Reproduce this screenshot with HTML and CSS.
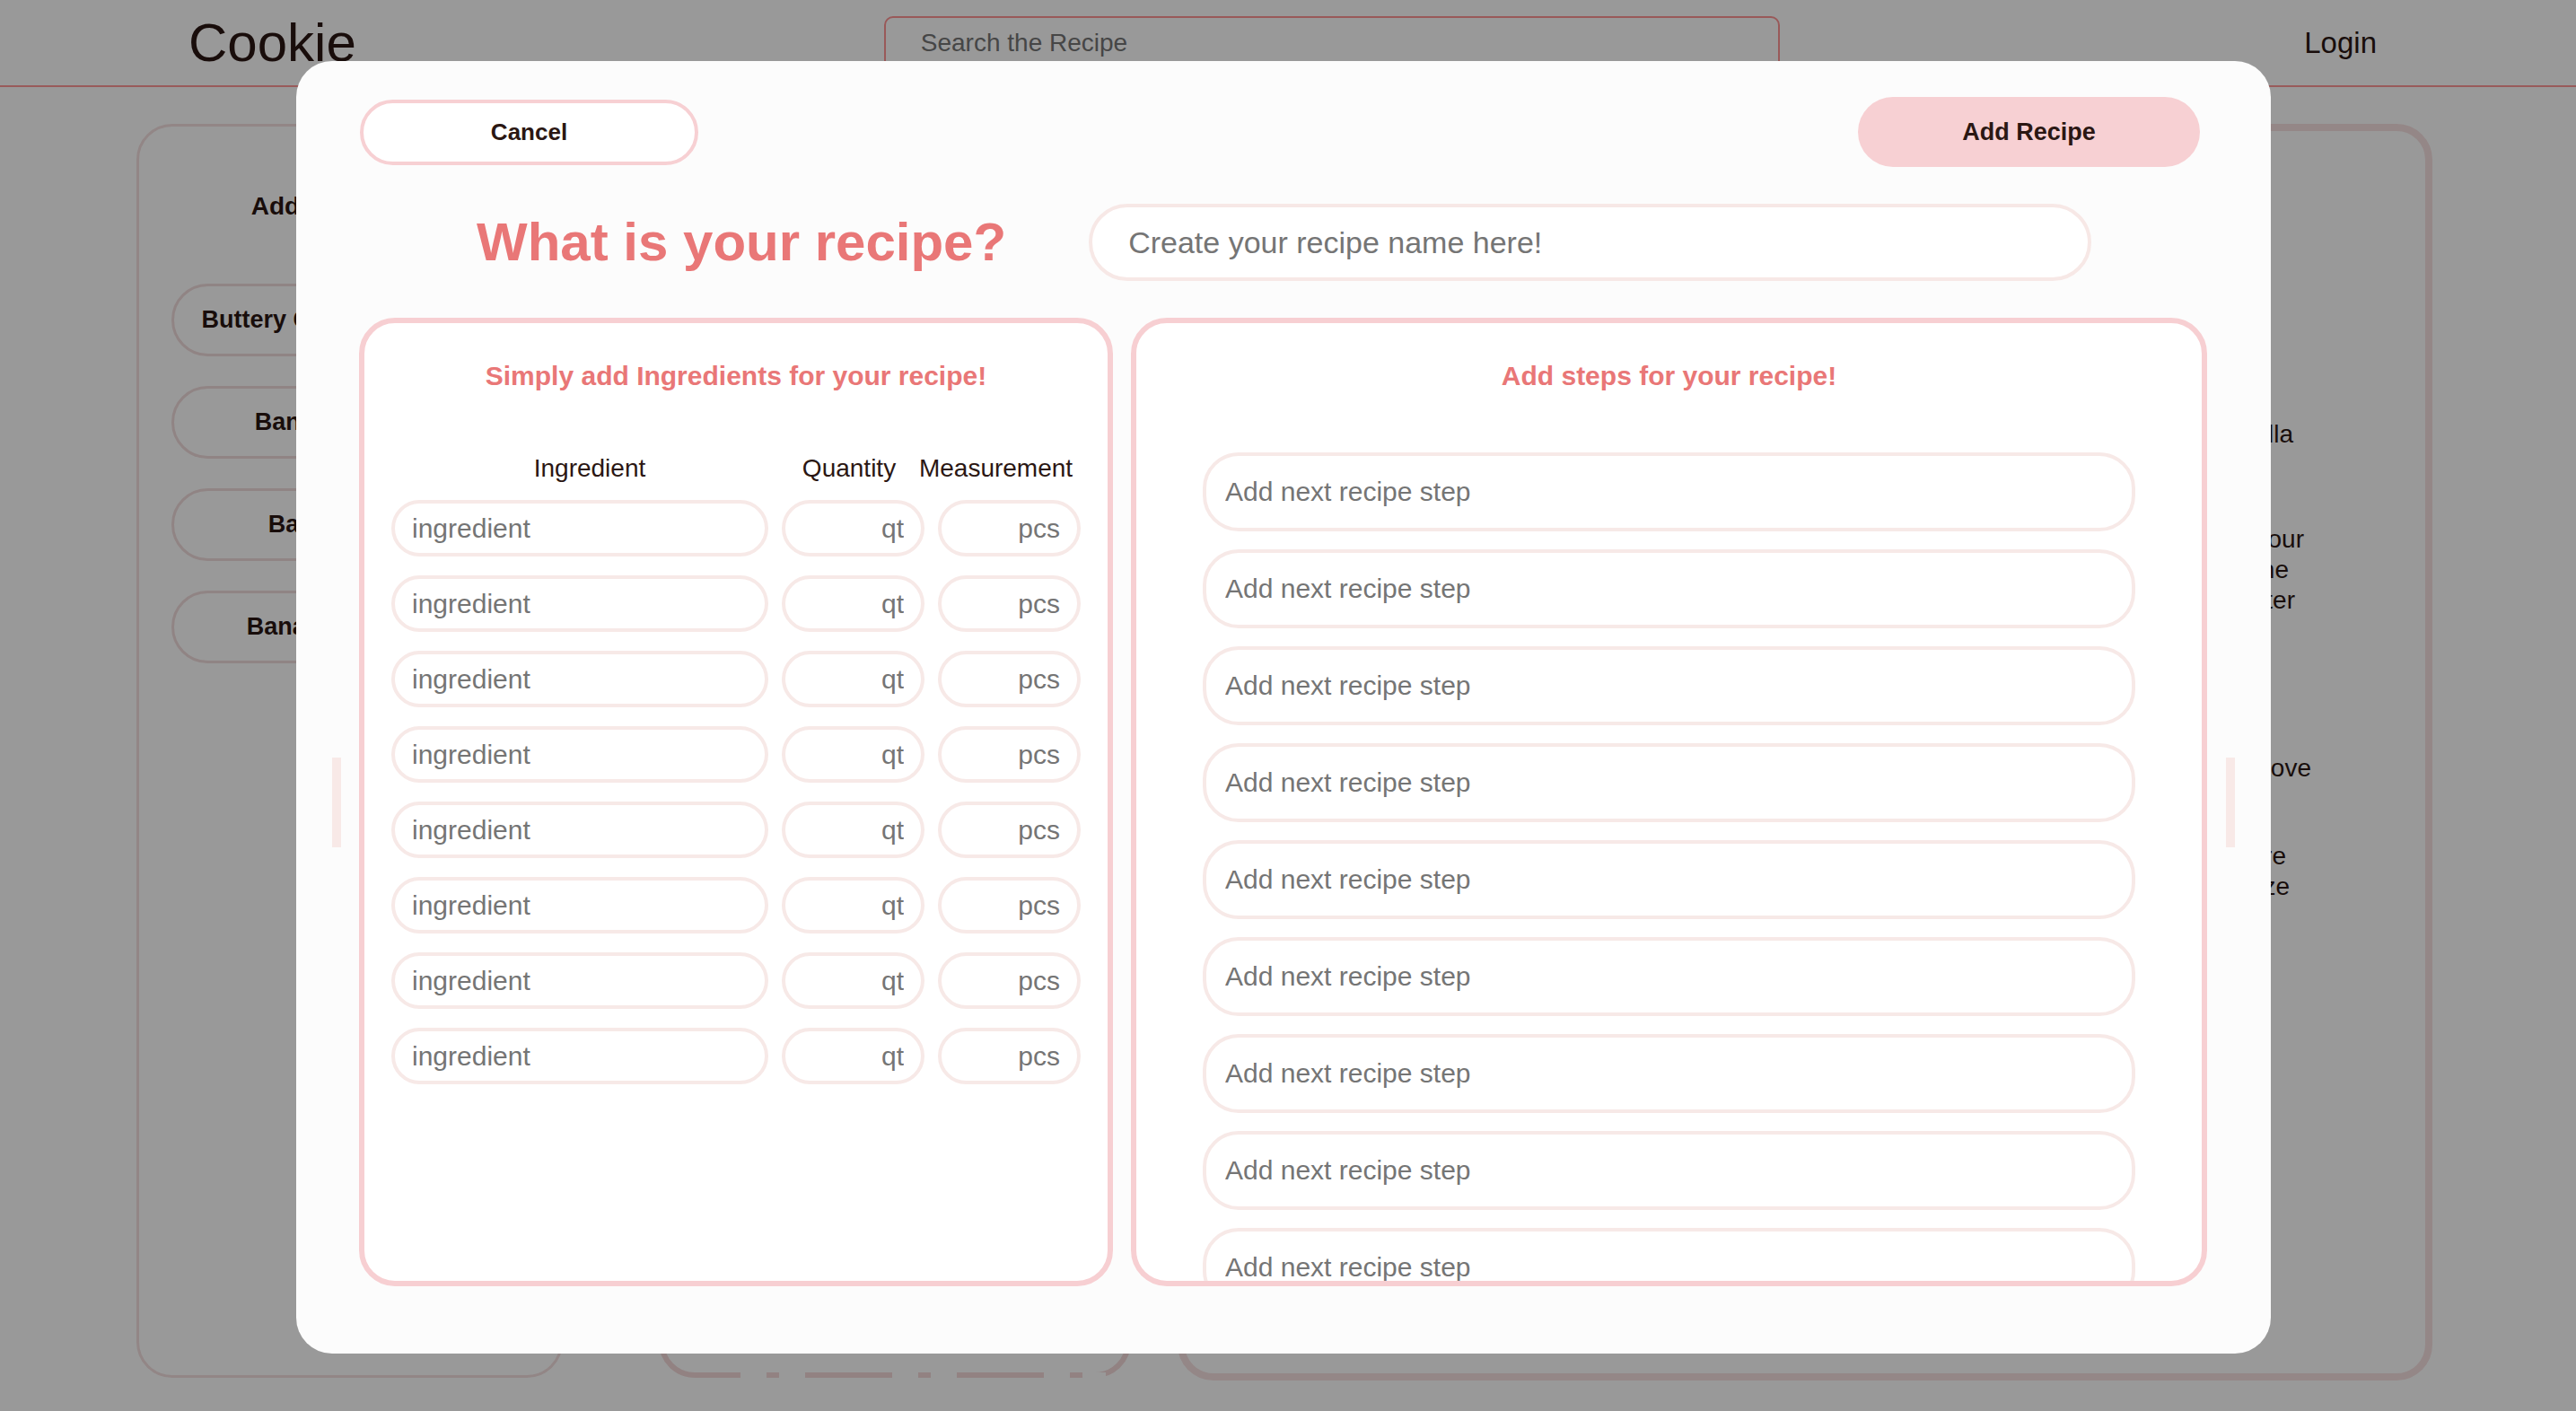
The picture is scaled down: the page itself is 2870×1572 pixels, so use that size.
FILE: index.html
```html
<!DOCTYPE html>
<html lang="en">
<head>
<meta charset="utf-8">
<title>Cookie</title>
<link rel="stylesheet" href="styles.css">
</head>
<body>
<header class="site-header">
  <div class="logo">Cookie</div>
  <input class="search" type="text" placeholder="Search the Recipe">
  <div class="login">Login</div>
</header>

<main class="page">
  <aside class="sidebar">
    <div class="sidebar-title">Add New Recipe</div>
    <div class="side-list">
      <div class="side-btn">Buttery Chocolate Cookie</div>
      <div class="side-btn">Banana Brownie</div>
      <div class="side-btn">Baked Donuts</div>
      <div class="side-btn">Banana Pancakes</div>
    </div>
  </aside>
  <section class="mid-card"></section>
  <section class="recipe-card">
    <div class="recipe-text">
      <span class="ln ln-a">2 tsp vanilla</span>
      <span class="ln ln-b">Whisk the flour</span>
      <span class="ln ln-c">baking soda in one</span>
      <span class="ln ln-d">salt with butter</span>
      <span class="ln ln-e">Bake in the stove</span>
      <span class="ln ln-f">Let cool before</span>
      <span class="ln ln-g">you freeze</span>
    </div>
  </section>
</main>

<div class="overlay">
  <div class="modal">
    <div class="handle handle-left"></div>
    <div class="handle handle-right"></div>

    <div class="modal-top">
      <button class="btn-cancel" type="button">Cancel</button>
      <button class="btn-add" type="button">Add Recipe</button>
    </div>

    <div class="title-row">
      <h1 class="title">What is your recipe?</h1>
      <input class="name-input" type="text" placeholder="Create your recipe name here!">
    </div>

    <div class="panels">
      <section class="panel">
        <h2 class="panel-title">Simply add Ingredients for your recipe!</h2>
        <div class="ing-labels">
          <span>Ingredient</span>
          <span>Quantity</span>
          <span>Measurement</span>
        </div>
        <div class="ing-rows">
          <div class="ing-row"><input class="field" placeholder="ingredient"><input class="field qt" placeholder="qt"><input class="field pcs" placeholder="pcs"></div>
          <div class="ing-row"><input class="field" placeholder="ingredient"><input class="field qt" placeholder="qt"><input class="field pcs" placeholder="pcs"></div>
          <div class="ing-row"><input class="field" placeholder="ingredient"><input class="field qt" placeholder="qt"><input class="field pcs" placeholder="pcs"></div>
          <div class="ing-row"><input class="field" placeholder="ingredient"><input class="field qt" placeholder="qt"><input class="field pcs" placeholder="pcs"></div>
          <div class="ing-row"><input class="field" placeholder="ingredient"><input class="field qt" placeholder="qt"><input class="field pcs" placeholder="pcs"></div>
          <div class="ing-row"><input class="field" placeholder="ingredient"><input class="field qt" placeholder="qt"><input class="field pcs" placeholder="pcs"></div>
          <div class="ing-row"><input class="field" placeholder="ingredient"><input class="field qt" placeholder="qt"><input class="field pcs" placeholder="pcs"></div>
          <div class="ing-row"><input class="field" placeholder="ingredient"><input class="field qt" placeholder="qt"><input class="field pcs" placeholder="pcs"></div>
        </div>
      </section>

      <section class="panel">
        <h2 class="panel-title">Add steps for your recipe!</h2>
        <div class="steps">
          <input class="step" placeholder="Add next recipe step">
          <input class="step" placeholder="Add next recipe step">
          <input class="step" placeholder="Add next recipe step">
          <input class="step" placeholder="Add next recipe step">
          <input class="step" placeholder="Add next recipe step">
          <input class="step" placeholder="Add next recipe step">
          <input class="step" placeholder="Add next recipe step">
          <input class="step" placeholder="Add next recipe step">
          <input class="step" placeholder="Add next recipe step">
        </div>
      </section>
    </div>
  </div>
</div>
</body>
</html>
```

FILE: styles.css
```css
* {
  box-sizing: border-box;
}

html,
body {
  margin: 0;
  padding: 0;
}

body {
  width: 2870px;
  height: 1572px;
  overflow: hidden;
  background: #ffffff;
  color: #2b1713;
  font-family: "Liberation Sans", Arial, sans-serif;
}

input,
button {
  font-family: "Liberation Sans", Arial, sans-serif;
}

input::placeholder {
  color: #757575;
  opacity: 1;
}

/* ---------- page behind the modal ---------- */
.site-header {
  height: 97px;
  display: flex;
  align-items: center;
  padding-left: 210px;
  border-bottom: 2px solid #ff9898;
}

.logo {
  font-size: 60px;
  line-height: 1;
}

.search {
  margin-left: 588px;
  width: 998px;
  height: 60px;
  border: 2px solid #ff9494;
  border-radius: 10px;
  padding: 0 39px;
  font-size: 28px;
  background: #ffffff;
  outline: none;
}

.login {
  margin-left: auto;
  margin-right: 222px;
  font-size: 33px;
  line-height: 1;
}

.page {
  display: flex;
  align-items: flex-start;
  padding: 41px 0 0 152px;
}

.sidebar {
  width: 475px;
  height: 1397px;
  border: 3px solid #f3dfdf;
  border-radius: 40px;
  padding: 73px 36px 0;
  display: flex;
  flex-direction: column;
}

.sidebar-title {
  font-size: 28px;
  font-weight: 700;
  line-height: 32px;
  text-align: center;
  white-space: nowrap;
}

.side-list {
  margin-top: 70px;
  display: flex;
  flex-direction: column;
  gap: 33px;
}

.side-btn {
  height: 81px;
  border: 3px solid #f1dcdc;
  border-radius: 41px;
  display: flex;
  align-items: center;
  justify-content: center;
  font-size: 27px;
  font-weight: 700;
  white-space: nowrap;
}

.mid-card {
  position: relative;
  margin-left: 107px;
  width: 526px;
  height: 1397px;
  border: 6px solid #f3d9d9;
  border-radius: 40px;
}

.mid-card::after {
  content: "";
  position: absolute;
  left: 85px;
  bottom: -6px;
  width: 407px;
  height: 6px;
  background: repeating-linear-gradient(to right, #ffffff 0 29px, transparent 29px 43px, #ffffff 43px 72px, transparent 72px 169px);
}

.recipe-card {
  margin-left: 52px;
  width: 1398px;
  height: 1400px;
  border: 8px solid #f7e1e1;
  border-radius: 40px;
}

.recipe-text {
  width: 1255px;
  text-align: right;
  font-size: 28px;
  line-height: 34px;
}

.ln {
  display: block;
  white-space: nowrap;
}

.ln-a {
  margin-top: 321px;
  padding-right: 20px;
}

.ln-b {
  margin-top: 83px;
  padding-right: 8px;
}

.ln-c {
  padding-right: 25px;
}

.ln-d {
  padding-right: 18px;
}

.ln-e {
  margin-top: 153px;
  padding-right: 0;
}

.ln-f {
  margin-top: 64px;
  padding-right: 28px;
}

.ln-g {
  padding-right: 24px;
}

/* ---------- modal ---------- */
.overlay {
  position: fixed;
  inset: 0;
  background: rgba(0, 0, 0, 0.4);
  display: flex;
  align-items: flex-start;
  padding: 68px 0 0 330px;
}

.modal {
  position: relative;
  width: 2200px;
  height: 1440px;
  background: #fcfcfc;
  border-radius: 40px;
  padding: 40px 71px 75px 70px;
  display: flex;
  flex-direction: column;
}

.handle {
  position: absolute;
  top: 776px;
  width: 10px;
  height: 100px;
  background: #f8e9e7;
}

.handle-left {
  left: 40px;
}

.handle-right {
  left: 2150px;
}

.modal-top {
  height: 78px;
  display: flex;
  align-items: center;
  justify-content: space-between;
  padding: 0 8px 0 1px;
}

.btn-cancel {
  width: 377px;
  height: 73px;
  border: 4px solid #f7d0d3;
  border-radius: 40px;
  background: #ffffff;
  color: #2b1713;
  font-size: 26px;
  font-weight: 700;
  cursor: pointer;
}

.btn-add {
  width: 381px;
  height: 78px;
  border: none;
  border-radius: 40px;
  background: #f7d0d3;
  color: #2b1713;
  font-size: 27px;
  font-weight: 700;
  cursor: pointer;
}

.title-row {
  margin-top: 41px;
  height: 86px;
  display: flex;
  align-items: center;
  gap: 92px;
  padding-left: 131px;
}

.title {
  margin: 0;
  font-size: 60px;
  line-height: 1;
  font-weight: 700;
  color: #e97777;
  white-space: nowrap;
}

.name-input {
  width: 1117px;
  height: 86px;
  border: 4px solid #f7e8e6;
  border-radius: 43px;
  padding: 0 0 0 40px;
  font-size: 34px;
  background: #ffffff;
  outline: none;
}

.panels {
  margin-top: 41px;
  height: 1079px;
  display: grid;
  grid-template-columns: 840px 1199px;
  gap: 20px;
}

.panel {
  height: 1079px;
  border: 6px solid #f7cfd2;
  border-radius: 40px;
  background: #ffffff;
  padding-top: 42px;
  overflow: hidden;
}

.panel-title {
  margin: 0;
  font-size: 30px;
  line-height: 34px;
  font-weight: 700;
  text-align: center;
  color: #e97777;
}

.ing-labels {
  margin: 70px 30px 0;
  display: grid;
  grid-template-columns: 442px 136px 191px;
  font-size: 28px;
  line-height: 32px;
  text-align: center;
}

.ing-rows {
  margin: 19px 30px 0;
  display: flex;
  flex-direction: column;
  gap: 21px;
}

.ing-row {
  display: grid;
  grid-template-columns: 420px 159px 159px;
  gap: 15px;
}

.field {
  height: 63px;
  width: 100%;
  border: 4px solid #f7e9e7;
  border-radius: 32px;
  padding: 0 19px;
  font-size: 30px;
  background: #ffffff;
  outline: none;
}

.field.qt {
  text-align: right;
  padding-right: 19px;
}

.field.pcs {
  text-align: right;
  padding-right: 19px;
}

.steps {
  margin: 68px 74px 0;
  display: flex;
  flex-direction: column;
  gap: 20px;
}

.step {
  flex: none;
  height: 88px;
  width: 100%;
  border: 4px solid #f7e9e7;
  border-radius: 40px;
  padding: 0 0 0 21px;
  font-size: 30px;
  background: #ffffff;
  outline: none;
}
```
